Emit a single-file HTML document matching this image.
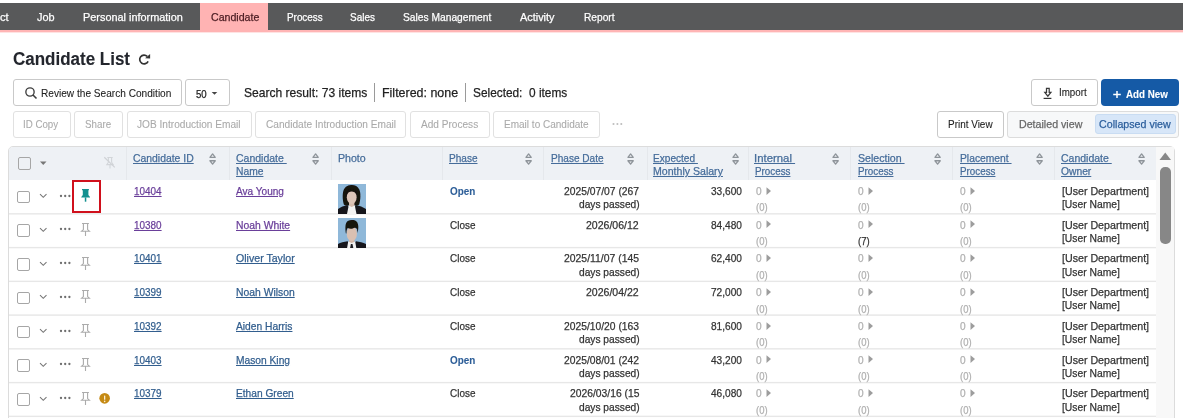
<!DOCTYPE html>
<html><head><meta charset="utf-8"><style>
html,body{margin:0;padding:0;width:1183px;height:418px;overflow:hidden;background:#fff;position:relative;font-family:"Liberation Sans", sans-serif;}
.t{position:absolute;white-space:nowrap;transform-origin:0 0;-webkit-text-stroke:0.25px currentColor;}
.a{position:absolute;box-sizing:border-box;}
</style></head><body>
<div class="a" style="left:0px;top:3px;width:1183px;height:27px;background:#58595a;"></div>
<div class="a" style="left:0px;top:30px;width:1183px;height:2px;background:#ffb5b5;"></div>
<div class="a" style="left:0px;top:32px;width:1183px;height:1px;background:#ffe3e3;"></div>
<div class="a" style="left:200px;top:3px;width:68px;height:29px;background:#ffb3b3;"></div>
<svg class="a" style="left:137px;top:53px;" width="15" height="14" viewBox="0 0 15 14"><path d="M10.2 3.3 A4.4 4.4 0 1 0 11.1 8.3" fill="none" stroke="#333" stroke-width="1.7"/><path d="M13.1 1 L13.1 5.5 L8.1 5.2 Z" fill="#333"/></svg>
<div class="a" style="left:12.5px;top:79px;width:169.0px;height:27px;border:1px solid #c9c9c9;border-radius:3px;background:#fff;"></div>
<svg class="a" style="left:25px;top:87px;" width="13" height="13" viewBox="0 0 13 13"><circle cx="5" cy="5" r="4.15" fill="none" stroke="#3d3d3d" stroke-width="1.35"/><line x1="8" y1="8" x2="11.5" y2="11.6" stroke="#3d3d3d" stroke-width="1.5"/></svg>
<div class="a" style="left:185px;top:79px;width:45px;height:27px;border:1px solid #c9c9c9;border-radius:3px;background:#fff;"></div>
<svg class="a" style="left:211px;top:91px;" width="7" height="5" viewBox="0 0 7 5"><path d="M0.7 1 L6.3 1 L3.5 3.7 Z" fill="#444"/></svg>
<div class="a" style="left:374px;top:83px;width:1px;height:19px;background:#9a9a9a;"></div>
<div class="a" style="left:465px;top:83px;width:1px;height:19px;background:#9a9a9a;"></div>
<div class="a" style="left:12.5px;top:111px;width:58.5px;height:27px;border:1px solid #e1e1e1;border-radius:3px;background:#fff;"></div>
<div class="a" style="left:74px;top:111px;width:48.5px;height:27px;border:1px solid #e1e1e1;border-radius:3px;background:#fff;"></div>
<div class="a" style="left:126.5px;top:111px;width:125.5px;height:27px;border:1px solid #e1e1e1;border-radius:3px;background:#fff;"></div>
<div class="a" style="left:255px;top:111px;width:151px;height:27px;border:1px solid #e1e1e1;border-radius:3px;background:#fff;"></div>
<div class="a" style="left:410px;top:111px;width:79.5px;height:27px;border:1px solid #e1e1e1;border-radius:3px;background:#fff;"></div>
<div class="a" style="left:493px;top:111px;width:107px;height:27px;border:1px solid #e1e1e1;border-radius:3px;background:#fff;"></div>
<svg class="a" style="left:611px;top:122px;" width="13" height="4" viewBox="0 0 13 4"><circle cx="2.5" cy="2" r="1.05" fill="#bdbdbd"/><circle cx="6.4" cy="2" r="1.05" fill="#bdbdbd"/><circle cx="10.3" cy="2" r="1.05" fill="#bdbdbd"/></svg>
<div class="a" style="left:1030.5px;top:79px;width:67.0px;height:27px;border:1px solid #c9c9c9;border-radius:3px;background:#fff;"></div>
<svg class="a" style="left:1043px;top:87px;" width="10" height="13" viewBox="0 0 10 13"><path d="M3.5 1.3 H6.2 V5.4 H7.9 L4.85 9.2 L1.8 5.4 H3.5 Z" fill="none" stroke="#3a3a3a" stroke-width="1.25" stroke-linejoin="miter"/><line x1="0.6" y1="11.4" x2="8.4" y2="11.4" stroke="#333" stroke-width="1.2"/></svg>
<div class="a" style="left:1101px;top:79px;width:78px;height:27px;background:#155aa6;border-radius:4px;"></div>
<svg class="a" style="left:1112px;top:90px;" width="10" height="9" viewBox="0 0 10 9"><path d="M5 1 V8 M1.2 4.5 H8.8" stroke="#fff" stroke-width="1.5"/></svg>
<div class="a" style="left:937px;top:111px;width:66.5px;height:26.5px;border:1px solid #c9c9c9;border-radius:3px;background:#fff;"></div>
<div class="a" style="left:1007px;top:111px;width:172px;height:27px;border:1px solid #dcdcdc;border-radius:3px;background:#f7f8f9;"></div>
<div class="a" style="left:1095px;top:114px;width:81px;height:20px;background:#d7e6f8;border:1px solid #c9dcf2;border-radius:3px;"></div>
<div class="a" style="left:8px;top:146px;width:1167px;height:284px;border:1px solid #dcdcdc;border-radius:5px;background:#fff;"></div>
<div class="a" style="left:9px;top:147px;width:1147px;height:33px;background:#eef1f5;border-top-left-radius:4px;"></div>
<div class="a" style="left:126px;top:147px;width:1px;height:33px;background:#e5e8ec;"></div>
<div class="a" style="left:229px;top:147px;width:1px;height:33px;background:#e5e8ec;"></div>
<div class="a" style="left:331px;top:147px;width:1px;height:33px;background:#e5e8ec;"></div>
<div class="a" style="left:442px;top:147px;width:1px;height:33px;background:#e5e8ec;"></div>
<div class="a" style="left:543px;top:147px;width:1px;height:33px;background:#e5e8ec;"></div>
<div class="a" style="left:647px;top:147px;width:1px;height:33px;background:#e5e8ec;"></div>
<div class="a" style="left:748px;top:147px;width:1px;height:33px;background:#e5e8ec;"></div>
<div class="a" style="left:850px;top:147px;width:1px;height:33px;background:#e5e8ec;"></div>
<div class="a" style="left:952px;top:147px;width:1px;height:33px;background:#e5e8ec;"></div>
<div class="a" style="left:1054px;top:147px;width:1px;height:33px;background:#e5e8ec;"></div>
<svg class="a" style="left:9px;top:0px;" width="1147" height="418"><rect x="0" y="213.15" width="1147" height="1.4" fill="#e7e7e7"/><rect x="0" y="246.90" width="1147" height="1.4" fill="#e7e7e7"/><rect x="0" y="280.65" width="1147" height="1.4" fill="#e7e7e7"/><rect x="0" y="314.40" width="1147" height="1.4" fill="#e7e7e7"/><rect x="0" y="348.15" width="1147" height="1.4" fill="#e7e7e7"/><rect x="0" y="381.90" width="1147" height="1.4" fill="#e7e7e7"/><rect x="0" y="415.65" width="1147" height="1.4" fill="#e7e7e7"/></svg>
<div class="a" style="left:17.5px;top:157px;width:13.0px;height:13px;border:1.6px solid #a6a6a6;border-radius:2px;"></div>
<svg class="a" style="left:39px;top:160px;" width="9" height="6" viewBox="0 0 9 6"><path d="M1 1.5 L7.5 1.5 L4.25 5 Z" fill="#777"/></svg>
<svg class="a" style="left:102px;top:155px;" width="15" height="15" viewBox="0 0 15 15"><path d="M5.3 2.5 H10.7 M6.4 2.5 V7.2 L4.8 9.6 H11.2 L9.6 7.2 V2.5 M8 9.6 V13.5" fill="none" stroke="#d2d5d9" stroke-width="1.1"/><line x1="2.3" y1="2.2" x2="12.8" y2="12.4" stroke="#cfd2d6" stroke-width="1.2"/></svg>
<svg class="a" style="left:209px;top:153px;" width="8" height="13" viewBox="0 0 8 13"><path d="M0.95 4.35 L3.6 0.95 L6.25 4.35 Z M0.95 7.75 L3.6 11.15 L6.25 7.75 Z" fill="none" stroke="#8e949a" stroke-width="1.3" stroke-linejoin="round"/></svg>
<svg class="a" style="left:312px;top:153px;" width="8" height="13" viewBox="0 0 8 13"><path d="M0.95 4.35 L3.6 0.95 L6.25 4.35 Z M0.95 7.75 L3.6 11.15 L6.25 7.75 Z" fill="none" stroke="#8e949a" stroke-width="1.3" stroke-linejoin="round"/></svg>
<svg class="a" style="left:525px;top:153px;" width="8" height="13" viewBox="0 0 8 13"><path d="M0.95 4.35 L3.6 0.95 L6.25 4.35 Z M0.95 7.75 L3.6 11.15 L6.25 7.75 Z" fill="none" stroke="#8e949a" stroke-width="1.3" stroke-linejoin="round"/></svg>
<svg class="a" style="left:627px;top:153px;" width="8" height="13" viewBox="0 0 8 13"><path d="M0.95 4.35 L3.6 0.95 L6.25 4.35 Z M0.95 7.75 L3.6 11.15 L6.25 7.75 Z" fill="none" stroke="#8e949a" stroke-width="1.3" stroke-linejoin="round"/></svg>
<svg class="a" style="left:731.7px;top:153px;" width="8" height="13" viewBox="0 0 8 13"><path d="M0.95 4.35 L3.6 0.95 L6.25 4.35 Z M0.95 7.75 L3.6 11.15 L6.25 7.75 Z" fill="none" stroke="#8e949a" stroke-width="1.3" stroke-linejoin="round"/></svg>
<svg class="a" style="left:831.7px;top:153px;" width="8" height="13" viewBox="0 0 8 13"><path d="M0.95 4.35 L3.6 0.95 L6.25 4.35 Z M0.95 7.75 L3.6 11.15 L6.25 7.75 Z" fill="none" stroke="#8e949a" stroke-width="1.3" stroke-linejoin="round"/></svg>
<svg class="a" style="left:934px;top:153px;" width="8" height="13" viewBox="0 0 8 13"><path d="M0.95 4.35 L3.6 0.95 L6.25 4.35 Z M0.95 7.75 L3.6 11.15 L6.25 7.75 Z" fill="none" stroke="#8e949a" stroke-width="1.3" stroke-linejoin="round"/></svg>
<svg class="a" style="left:1036.2px;top:153px;" width="8" height="13" viewBox="0 0 8 13"><path d="M0.95 4.35 L3.6 0.95 L6.25 4.35 Z M0.95 7.75 L3.6 11.15 L6.25 7.75 Z" fill="none" stroke="#8e949a" stroke-width="1.3" stroke-linejoin="round"/></svg>
<svg class="a" style="left:1137.8px;top:153px;" width="8" height="13" viewBox="0 0 8 13"><path d="M0.95 4.35 L3.6 0.95 L6.25 4.35 Z M0.95 7.75 L3.6 11.15 L6.25 7.75 Z" fill="none" stroke="#8e949a" stroke-width="1.3" stroke-linejoin="round"/></svg>
<div class="a" style="left:1156px;top:147px;width:18px;height:271px;background:#f8f8f8;"></div>
<svg class="a" style="left:1159px;top:151px;" width="13" height="10" viewBox="0 0 13 10"><path d="M0.5 9 L6.25 1.5 L12 9 Z" fill="#888"/></svg>
<div class="a" style="left:1160px;top:167px;width:10.5px;height:76.5px;background:#878787;border-radius:5px;"></div>
<div class="a" style="left:17px;top:190.5px;width:13px;height:12.5px;border:1.6px solid #a6a6a6;border-radius:2px;background:#fff;"></div>
<svg class="a" style="left:39px;top:193.0px;" width="9" height="6" viewBox="0 0 9 6"><path d="M1 1.2 L4.25 4.3 L7.5 1.2" fill="none" stroke="#777" stroke-width="1.1"/></svg>
<svg class="a" style="left:59px;top:193.5px;" width="13" height="4" viewBox="0 0 13 4"><circle cx="2" cy="2" r="1.15" fill="#6e6e6e"/><circle cx="6.2" cy="2" r="1.15" fill="#6e6e6e"/><circle cx="10.4" cy="2" r="1.15" fill="#6e6e6e"/></svg>
<svg class="a" style="left:80px;top:188px;" width="12" height="15" viewBox="0 0 12 15"><path d="M2 1 H8.9 V2.2 H8.4 V7 L10 9 V9.6 H1.3 V9 L2.8 7 V2.2 H2 Z" fill="#13908f"/><rect x="4.8" y="9.4" width="1.5" height="4.3" fill="#13908f"/></svg>
<div class="a" style="left:72px;top:180px;width:28.5px;height:33px;border:2.6px solid #d0101c;"></div>
<svg class="a" style="left:766.2px;top:186.6px;" width="6" height="9" viewBox="0 0 6 9"><path d="M0.5 0.3 L5 4.1 L0.5 7.9 Z" fill="#9d9d9d"/></svg>
<svg class="a" style="left:868.2px;top:186.6px;" width="6" height="9" viewBox="0 0 6 9"><path d="M0.5 0.3 L5 4.1 L0.5 7.9 Z" fill="#9d9d9d"/></svg>
<svg class="a" style="left:970.2px;top:186.6px;" width="6" height="9" viewBox="0 0 6 9"><path d="M0.5 0.3 L5 4.1 L0.5 7.9 Z" fill="#9d9d9d"/></svg>
<div class="a" style="left:17px;top:224.25px;width:13px;height:12.5px;border:1.6px solid #a6a6a6;border-radius:2px;background:#fff;"></div>
<svg class="a" style="left:39px;top:226.75px;" width="9" height="6" viewBox="0 0 9 6"><path d="M1 1.2 L4.25 4.3 L7.5 1.2" fill="none" stroke="#777" stroke-width="1.1"/></svg>
<svg class="a" style="left:59px;top:227.25px;" width="13" height="4" viewBox="0 0 13 4"><circle cx="2" cy="2" r="1.15" fill="#6e6e6e"/><circle cx="6.2" cy="2" r="1.15" fill="#6e6e6e"/><circle cx="10.4" cy="2" r="1.15" fill="#6e6e6e"/></svg>
<svg class="a" style="left:80px;top:221.75px;" width="12" height="15" viewBox="0 0 12 15"><path d="M2 1.5 H8.9 M3.4 1.5 V7.6 L1.6 9.2 H9.4 L7.6 7.6 V1.5 M5.5 9.2 V14" fill="none" stroke="#ababab" stroke-width="1.1"/></svg>
<svg class="a" style="left:766.2px;top:220.35px;" width="6" height="9" viewBox="0 0 6 9"><path d="M0.5 0.3 L5 4.1 L0.5 7.9 Z" fill="#9d9d9d"/></svg>
<svg class="a" style="left:868.2px;top:220.35px;" width="6" height="9" viewBox="0 0 6 9"><path d="M0.5 0.3 L5 4.1 L0.5 7.9 Z" fill="#9d9d9d"/></svg>
<svg class="a" style="left:970.2px;top:220.35px;" width="6" height="9" viewBox="0 0 6 9"><path d="M0.5 0.3 L5 4.1 L0.5 7.9 Z" fill="#9d9d9d"/></svg>
<div class="a" style="left:17px;top:258.0px;width:13px;height:12.5px;border:1.6px solid #a6a6a6;border-radius:2px;background:#fff;"></div>
<svg class="a" style="left:39px;top:260.5px;" width="9" height="6" viewBox="0 0 9 6"><path d="M1 1.2 L4.25 4.3 L7.5 1.2" fill="none" stroke="#777" stroke-width="1.1"/></svg>
<svg class="a" style="left:59px;top:261.0px;" width="13" height="4" viewBox="0 0 13 4"><circle cx="2" cy="2" r="1.15" fill="#6e6e6e"/><circle cx="6.2" cy="2" r="1.15" fill="#6e6e6e"/><circle cx="10.4" cy="2" r="1.15" fill="#6e6e6e"/></svg>
<svg class="a" style="left:80px;top:255.5px;" width="12" height="15" viewBox="0 0 12 15"><path d="M2 1.5 H8.9 M3.4 1.5 V7.6 L1.6 9.2 H9.4 L7.6 7.6 V1.5 M5.5 9.2 V14" fill="none" stroke="#ababab" stroke-width="1.1"/></svg>
<svg class="a" style="left:766.2px;top:254.1px;" width="6" height="9" viewBox="0 0 6 9"><path d="M0.5 0.3 L5 4.1 L0.5 7.9 Z" fill="#9d9d9d"/></svg>
<svg class="a" style="left:868.2px;top:254.1px;" width="6" height="9" viewBox="0 0 6 9"><path d="M0.5 0.3 L5 4.1 L0.5 7.9 Z" fill="#9d9d9d"/></svg>
<svg class="a" style="left:970.2px;top:254.1px;" width="6" height="9" viewBox="0 0 6 9"><path d="M0.5 0.3 L5 4.1 L0.5 7.9 Z" fill="#9d9d9d"/></svg>
<div class="a" style="left:17px;top:291.75px;width:13px;height:12.5px;border:1.6px solid #a6a6a6;border-radius:2px;background:#fff;"></div>
<svg class="a" style="left:39px;top:294.25px;" width="9" height="6" viewBox="0 0 9 6"><path d="M1 1.2 L4.25 4.3 L7.5 1.2" fill="none" stroke="#777" stroke-width="1.1"/></svg>
<svg class="a" style="left:59px;top:294.75px;" width="13" height="4" viewBox="0 0 13 4"><circle cx="2" cy="2" r="1.15" fill="#6e6e6e"/><circle cx="6.2" cy="2" r="1.15" fill="#6e6e6e"/><circle cx="10.4" cy="2" r="1.15" fill="#6e6e6e"/></svg>
<svg class="a" style="left:80px;top:289.25px;" width="12" height="15" viewBox="0 0 12 15"><path d="M2 1.5 H8.9 M3.4 1.5 V7.6 L1.6 9.2 H9.4 L7.6 7.6 V1.5 M5.5 9.2 V14" fill="none" stroke="#ababab" stroke-width="1.1"/></svg>
<svg class="a" style="left:766.2px;top:287.85px;" width="6" height="9" viewBox="0 0 6 9"><path d="M0.5 0.3 L5 4.1 L0.5 7.9 Z" fill="#9d9d9d"/></svg>
<svg class="a" style="left:868.2px;top:287.85px;" width="6" height="9" viewBox="0 0 6 9"><path d="M0.5 0.3 L5 4.1 L0.5 7.9 Z" fill="#9d9d9d"/></svg>
<svg class="a" style="left:970.2px;top:287.85px;" width="6" height="9" viewBox="0 0 6 9"><path d="M0.5 0.3 L5 4.1 L0.5 7.9 Z" fill="#9d9d9d"/></svg>
<div class="a" style="left:17px;top:325.5px;width:13px;height:12.5px;border:1.6px solid #a6a6a6;border-radius:2px;background:#fff;"></div>
<svg class="a" style="left:39px;top:328.0px;" width="9" height="6" viewBox="0 0 9 6"><path d="M1 1.2 L4.25 4.3 L7.5 1.2" fill="none" stroke="#777" stroke-width="1.1"/></svg>
<svg class="a" style="left:59px;top:328.5px;" width="13" height="4" viewBox="0 0 13 4"><circle cx="2" cy="2" r="1.15" fill="#6e6e6e"/><circle cx="6.2" cy="2" r="1.15" fill="#6e6e6e"/><circle cx="10.4" cy="2" r="1.15" fill="#6e6e6e"/></svg>
<svg class="a" style="left:80px;top:323.0px;" width="12" height="15" viewBox="0 0 12 15"><path d="M2 1.5 H8.9 M3.4 1.5 V7.6 L1.6 9.2 H9.4 L7.6 7.6 V1.5 M5.5 9.2 V14" fill="none" stroke="#ababab" stroke-width="1.1"/></svg>
<svg class="a" style="left:766.2px;top:321.6px;" width="6" height="9" viewBox="0 0 6 9"><path d="M0.5 0.3 L5 4.1 L0.5 7.9 Z" fill="#9d9d9d"/></svg>
<svg class="a" style="left:868.2px;top:321.6px;" width="6" height="9" viewBox="0 0 6 9"><path d="M0.5 0.3 L5 4.1 L0.5 7.9 Z" fill="#9d9d9d"/></svg>
<svg class="a" style="left:970.2px;top:321.6px;" width="6" height="9" viewBox="0 0 6 9"><path d="M0.5 0.3 L5 4.1 L0.5 7.9 Z" fill="#9d9d9d"/></svg>
<div class="a" style="left:17px;top:359.25px;width:13px;height:12.5px;border:1.6px solid #a6a6a6;border-radius:2px;background:#fff;"></div>
<svg class="a" style="left:39px;top:361.75px;" width="9" height="6" viewBox="0 0 9 6"><path d="M1 1.2 L4.25 4.3 L7.5 1.2" fill="none" stroke="#777" stroke-width="1.1"/></svg>
<svg class="a" style="left:59px;top:362.25px;" width="13" height="4" viewBox="0 0 13 4"><circle cx="2" cy="2" r="1.15" fill="#6e6e6e"/><circle cx="6.2" cy="2" r="1.15" fill="#6e6e6e"/><circle cx="10.4" cy="2" r="1.15" fill="#6e6e6e"/></svg>
<svg class="a" style="left:80px;top:356.75px;" width="12" height="15" viewBox="0 0 12 15"><path d="M2 1.5 H8.9 M3.4 1.5 V7.6 L1.6 9.2 H9.4 L7.6 7.6 V1.5 M5.5 9.2 V14" fill="none" stroke="#ababab" stroke-width="1.1"/></svg>
<svg class="a" style="left:766.2px;top:355.35px;" width="6" height="9" viewBox="0 0 6 9"><path d="M0.5 0.3 L5 4.1 L0.5 7.9 Z" fill="#9d9d9d"/></svg>
<svg class="a" style="left:868.2px;top:355.35px;" width="6" height="9" viewBox="0 0 6 9"><path d="M0.5 0.3 L5 4.1 L0.5 7.9 Z" fill="#9d9d9d"/></svg>
<svg class="a" style="left:970.2px;top:355.35px;" width="6" height="9" viewBox="0 0 6 9"><path d="M0.5 0.3 L5 4.1 L0.5 7.9 Z" fill="#9d9d9d"/></svg>
<div class="a" style="left:17px;top:393.0px;width:13px;height:12.5px;border:1.6px solid #a6a6a6;border-radius:2px;background:#fff;"></div>
<svg class="a" style="left:39px;top:395.5px;" width="9" height="6" viewBox="0 0 9 6"><path d="M1 1.2 L4.25 4.3 L7.5 1.2" fill="none" stroke="#777" stroke-width="1.1"/></svg>
<svg class="a" style="left:59px;top:396.0px;" width="13" height="4" viewBox="0 0 13 4"><circle cx="2" cy="2" r="1.15" fill="#6e6e6e"/><circle cx="6.2" cy="2" r="1.15" fill="#6e6e6e"/><circle cx="10.4" cy="2" r="1.15" fill="#6e6e6e"/></svg>
<svg class="a" style="left:80px;top:390.5px;" width="12" height="15" viewBox="0 0 12 15"><path d="M2 1.5 H8.9 M3.4 1.5 V7.6 L1.6 9.2 H9.4 L7.6 7.6 V1.5 M5.5 9.2 V14" fill="none" stroke="#ababab" stroke-width="1.1"/></svg>
<svg class="a" style="left:99px;top:392.5px;" width="12" height="12" viewBox="0 0 12 12"><circle cx="5.65" cy="5.35" r="5.3" fill="#c58a14"/><rect x="5" y="2.4" width="1.3" height="4.3" rx="0.5" fill="#fbeed2"/><circle cx="5.65" cy="8.4" r="0.8" fill="#fbeed2"/></svg>
<svg class="a" style="left:766.2px;top:389.1px;" width="6" height="9" viewBox="0 0 6 9"><path d="M0.5 0.3 L5 4.1 L0.5 7.9 Z" fill="#9d9d9d"/></svg>
<svg class="a" style="left:868.2px;top:389.1px;" width="6" height="9" viewBox="0 0 6 9"><path d="M0.5 0.3 L5 4.1 L0.5 7.9 Z" fill="#9d9d9d"/></svg>
<svg class="a" style="left:970.2px;top:389.1px;" width="6" height="9" viewBox="0 0 6 9"><path d="M0.5 0.3 L5 4.1 L0.5 7.9 Z" fill="#9d9d9d"/></svg>
<svg class="a" style="left:338px;top:184px;" width="28" height="30" viewBox="0 0 28 30"><defs><filter id="bl" x="-5%" y="-5%" width="110%" height="110%"><feGaussianBlur stdDeviation="0.4"/></filter></defs>
<rect width="28" height="30" fill="#8fb8d9"/>
<g filter="url(#bl)">
<path d="M5.8 20.5 C4.4 15 4.2 8 6.3 4.8 C8.3 1.6 11.5 1 13.8 1 C17 1 19.9 2.4 21.3 5.5 C22.9 9 22.7 15.5 21.2 20.5 C20 21.6 18 21.9 16.5 21.6 L11 21.6 C9 21.9 7 21.6 5.8 20.5 Z" fill="#17120f"/>
<rect x="11" y="17" width="5.4" height="7" fill="#d6bcae"/>
<ellipse cx="13.7" cy="13.2" rx="4.9" ry="6.8" fill="#ddc5b8"/>
<path d="M8.6 10.8 C9 6.5 11 5 14 5 C17 5 18.7 6.8 18.9 10.8 C17.6 8.2 15.6 7.4 13.6 7.4 C11.6 7.4 9.6 8.4 8.6 10.8 Z" fill="#17120f"/>
<path d="M0 30 V25 C2.5 23 6 22 9.5 21.3 L13.7 26.5 L18 21.3 C21.5 22 25 23 28 25 V30 Z" fill="#15171d"/>
<path d="M10.6 21.6 L13.7 23 L16.9 21.6 L17 22.5 L18.5 30 H9 L10.5 22.5 Z" fill="#f3f3f3"/>
</g></svg>
<svg class="a" style="left:338px;top:217.5px;" width="28" height="30" viewBox="0 0 28 30"><rect width="28" height="30" fill="#8fb8d9"/>
<g filter="url(#bl)">
<rect x="11" y="20" width="5.4" height="5" fill="#d2b6a6"/>
<ellipse cx="13.8" cy="15.8" rx="5.1" ry="7.4" fill="#d9c0b2"/>
<path d="M7.9 15.5 C7 9.5 7.3 4.8 9.8 3.1 C12.2 1.5 16.3 1.5 18.5 3.4 C20.6 5.3 20.7 9.8 19.6 15 L19.1 11.2 C18 9.6 16.5 9.2 14.8 10.4 C13 11.2 11 10.6 9.8 10 C8.8 10.8 8.4 12.5 8.4 15.5 Z" fill="#16120f"/>
<path d="M0 30 V26 C2.5 24.6 6 23.8 9.5 23.3 L13.7 27.5 L18 23.3 C21.5 23.8 25 24.6 28 26 V30 Z" fill="#15171d"/>
<path d="M10.2 23.4 L13.7 25 L17.2 23.4 L18.3 30 H9.1 Z" fill="#f1f1f1"/>
<path d="M12.9 26 L14.5 26 L15.3 30 H12.1 Z" fill="#1a1c22"/>
</g></svg>
<span class="t" style="left:-0.50px;top:12.00px;font-size:11.5px;line-height:11.5px;color:#ffffff;transform:scaleX(0.9744);">ct</span>
<span class="t" style="left:37.30px;top:12.00px;font-size:11.5px;line-height:11.5px;color:#ffffff;transform:scaleX(0.9479);">Job</span>
<span class="t" style="left:82.50px;top:12.00px;font-size:11.5px;line-height:11.5px;color:#ffffff;transform:scaleX(0.9469);">Personal information</span>
<span class="t" style="left:210.50px;top:12.00px;font-size:11.5px;line-height:11.5px;color:#4a1c22;transform:scaleX(0.9225);">Candidate</span>
<span class="t" style="left:286.70px;top:12.00px;font-size:11.5px;line-height:11.5px;color:#ffffff;transform:scaleX(0.8590);">Process</span>
<span class="t" style="left:350.40px;top:12.00px;font-size:11.5px;line-height:11.5px;color:#ffffff;transform:scaleX(0.8650);">Sales</span>
<span class="t" style="left:403.40px;top:12.00px;font-size:11.5px;line-height:11.5px;color:#ffffff;transform:scaleX(0.8910);">Sales Management</span>
<span class="t" style="left:520.30px;top:12.00px;font-size:11.5px;line-height:11.5px;color:#ffffff;transform:scaleX(0.9463);">Activity</span>
<span class="t" style="left:583.70px;top:12.00px;font-size:11.5px;line-height:11.5px;color:#ffffff;transform:scaleX(0.8861);">Report</span>
<span class="t" style="left:13.40px;top:50.00px;font-size:18px;line-height:18px;color:#23262d;font-weight:700;-webkit-text-stroke:0.1px currentColor;transform:scaleX(0.9434);">Candidate List</span>
<span class="t" style="left:40.70px;top:89.00px;font-size:10.2px;line-height:10.2px;color:#222;transform:scaleX(0.9923);-webkit-text-stroke:0.08px currentColor;">Review the Search Condition</span>
<span class="t" style="left:195.90px;top:90.00px;font-size:10.4px;line-height:10.4px;color:#222;transform:scaleX(0.9254);">50</span>
<span class="t" style="left:243.70px;top:86.00px;font-size:13.3px;line-height:13.3px;color:#222;transform:scaleX(0.9073);">Search result: 73 items</span>
<span class="t" style="left:381.66px;top:86.00px;font-size:13.3px;line-height:13.3px;color:#222;transform:scaleX(0.9360);">Filtered: none</span>
<span class="t" style="left:473.00px;top:86.00px;font-size:13.3px;line-height:13.3px;color:#222;transform:scaleX(0.8912);">Selected:&nbsp; 0 items</span>
<span class="t" style="left:23.40px;top:120.00px;font-size:10.2px;line-height:10.2px;color:#aaaaaa;transform:scaleX(0.9547);-webkit-text-stroke:0.08px currentColor;">ID Copy</span>
<span class="t" style="left:85.40px;top:120.00px;font-size:10.2px;line-height:10.2px;color:#aaaaaa;transform:scaleX(0.9593);-webkit-text-stroke:0.08px currentColor;">Share</span>
<span class="t" style="left:137.10px;top:120.00px;font-size:10.2px;line-height:10.2px;color:#aaaaaa;transform:scaleX(0.9940);-webkit-text-stroke:0.08px currentColor;">JOB Introduction Email</span>
<span class="t" style="left:266.20px;top:120.00px;font-size:10.2px;line-height:10.2px;color:#aaaaaa;transform:scaleX(0.9942);-webkit-text-stroke:0.08px currentColor;">Candidate Introduction Email</span>
<span class="t" style="left:421.40px;top:120.00px;font-size:10.2px;line-height:10.2px;color:#aaaaaa;transform:scaleX(0.9902);-webkit-text-stroke:0.08px currentColor;">Add Process</span>
<span class="t" style="left:503.90px;top:120.00px;font-size:10.2px;line-height:10.2px;color:#aaaaaa;transform:scaleX(0.9837);-webkit-text-stroke:0.08px currentColor;">Email to Candidate</span>
<span class="t" style="left:1058.80px;top:88.00px;font-size:10px;line-height:10px;color:#222;transform:scaleX(0.9768);-webkit-text-stroke:0.08px currentColor;">Import</span>
<span class="t" style="left:1125.70px;top:89.00px;font-size:11px;line-height:11px;color:#ffffff;font-weight:700;-webkit-text-stroke:0.1px currentColor;transform:scaleX(0.8905);">Add New</span>
<span class="t" style="left:947.60px;top:120.00px;font-size:10.2px;line-height:10.2px;color:#222;transform:scaleX(0.9759);-webkit-text-stroke:0.08px currentColor;">Print View</span>
<span class="t" style="left:1018.80px;top:119.00px;font-size:11.5px;line-height:11.5px;color:#666;transform:scaleX(0.9263);">Detailed view</span>
<span class="t" style="left:1099.20px;top:119.00px;font-size:11.5px;line-height:11.5px;color:#2b5e9c;transform:scaleX(0.9277);">Collapsed view</span>
<span class="t" style="left:133.40px;top:153.00px;font-size:11.2px;line-height:11.2px;color:#456c9a;transform:scaleX(0.9291);text-decoration:underline;">Candidate ID</span>
<span class="t" style="left:235.70px;top:153.00px;font-size:11.2px;line-height:11.2px;color:#456c9a;transform:scaleX(0.9373);text-decoration:underline;">Candidate&nbsp;</span>
<span class="t" style="left:235.70px;top:166.00px;font-size:11.2px;line-height:11.2px;color:#456c9a;transform:scaleX(0.9187);text-decoration:underline;">Name</span>
<span class="t" style="left:338.00px;top:153.00px;font-size:11.2px;line-height:11.2px;color:#456c9a;transform:scaleX(0.9478);">Photo</span>
<span class="t" style="left:449.20px;top:153.00px;font-size:11.2px;line-height:11.2px;color:#456c9a;transform:scaleX(0.8984);text-decoration:underline;">Phase</span>
<span class="t" style="left:551.20px;top:153.00px;font-size:11.2px;line-height:11.2px;color:#456c9a;transform:scaleX(0.8997);text-decoration:underline;">Phase Date</span>
<span class="t" style="left:653.40px;top:153.00px;font-size:11.2px;line-height:11.2px;color:#456c9a;transform:scaleX(0.9026);text-decoration:underline;">Expected&nbsp;</span>
<span class="t" style="left:653.40px;top:166.00px;font-size:11.2px;line-height:11.2px;color:#456c9a;transform:scaleX(0.9449);text-decoration:underline;">Monthly Salary</span>
<span class="t" style="left:754.28px;top:153.00px;font-size:11.2px;line-height:11.2px;color:#456c9a;transform:scaleX(1.0159);text-decoration:underline;">Internal&nbsp;</span>
<span class="t" style="left:755.30px;top:166.00px;font-size:11.2px;line-height:11.2px;color:#456c9a;transform:scaleX(0.8770);text-decoration:underline;">Process</span>
<span class="t" style="left:857.50px;top:153.00px;font-size:11.2px;line-height:11.2px;color:#456c9a;transform:scaleX(0.9476);text-decoration:underline;">Selection&nbsp;</span>
<span class="t" style="left:857.50px;top:166.00px;font-size:11.2px;line-height:11.2px;color:#456c9a;transform:scaleX(0.8770);text-decoration:underline;">Process</span>
<span class="t" style="left:959.50px;top:153.00px;font-size:11.2px;line-height:11.2px;color:#456c9a;transform:scaleX(0.9210);text-decoration:underline;">Placement&nbsp;</span>
<span class="t" style="left:959.50px;top:166.00px;font-size:11.2px;line-height:11.2px;color:#456c9a;transform:scaleX(0.8770);text-decoration:underline;">Process</span>
<span class="t" style="left:1061.30px;top:153.00px;font-size:11.2px;line-height:11.2px;color:#456c9a;transform:scaleX(0.9373);text-decoration:underline;">Candidate&nbsp;</span>
<span class="t" style="left:1061.30px;top:166.00px;font-size:11.2px;line-height:11.2px;color:#456c9a;transform:scaleX(0.9187);text-decoration:underline;">Owner</span>
<span class="t" style="left:134.00px;top:186.00px;font-size:11px;line-height:11px;color:#6a3f9a;transform:scaleX(0.9025);text-decoration:underline;">10404</span>
<span class="t" style="left:236.00px;top:186.00px;font-size:11px;line-height:11px;color:#6a3f9a;transform:scaleX(0.9144);text-decoration:underline;">Ava Young</span>
<span class="t" style="left:449.90px;top:186.00px;font-size:11px;line-height:11px;color:#2d5e98;font-weight:700;-webkit-text-stroke:0.1px currentColor;transform:scaleX(0.9016);">Open</span>
<span class="t" style="left:564.10px;top:186.00px;font-size:11px;line-height:11px;color:#333333;transform:scaleX(0.9362);">2025/07/07 (267</span>
<span class="t" style="left:579.00px;top:199.00px;font-size:11px;line-height:11px;color:#333333;transform:scaleX(0.9265);">days passed)</span>
<span class="t" style="left:711.00px;top:186.00px;font-size:11px;line-height:11px;color:#333333;transform:scaleX(0.9187);">33,600</span>
<span class="t" style="left:755.80px;top:186.00px;font-size:11px;line-height:11px;color:#b0b0b0;transform:scaleX(0.9187);">0</span>
<span class="t" style="left:755.50px;top:202.00px;font-size:11px;line-height:11px;color:#b0b0b0;transform:scaleX(0.8607);">(0)</span>
<span class="t" style="left:857.80px;top:186.00px;font-size:11px;line-height:11px;color:#b0b0b0;transform:scaleX(0.9187);">0</span>
<span class="t" style="left:857.50px;top:202.00px;font-size:11px;line-height:11px;color:#b0b0b0;transform:scaleX(0.8607);">(0)</span>
<span class="t" style="left:959.80px;top:186.00px;font-size:11px;line-height:11px;color:#b0b0b0;transform:scaleX(0.9187);">0</span>
<span class="t" style="left:959.50px;top:202.00px;font-size:11px;line-height:11px;color:#b0b0b0;transform:scaleX(0.8607);">(0)</span>
<span class="t" style="left:1062.30px;top:186.00px;font-size:11px;line-height:11px;color:#333333;transform:scaleX(0.9687);">[User Department]</span>
<span class="t" style="left:1062.30px;top:199.00px;font-size:11px;line-height:11px;color:#333333;transform:scaleX(0.9371);">[User Name]</span>
<span class="t" style="left:134.00px;top:220.00px;font-size:11px;line-height:11px;color:#6a3f9a;transform:scaleX(0.9025);text-decoration:underline;">10380</span>
<span class="t" style="left:236.00px;top:220.00px;font-size:11px;line-height:11px;color:#6a3f9a;transform:scaleX(0.9415);text-decoration:underline;">Noah White</span>
<span class="t" style="left:449.60px;top:220.00px;font-size:11px;line-height:11px;color:#333333;transform:scaleX(0.9034);">Close</span>
<span class="t" style="left:586.40px;top:220.00px;font-size:11px;line-height:11px;color:#333333;transform:scaleX(0.9575);">2026/06/12</span>
<span class="t" style="left:711.00px;top:220.00px;font-size:11px;line-height:11px;color:#333333;transform:scaleX(0.9187);">84,480</span>
<span class="t" style="left:755.80px;top:220.00px;font-size:11px;line-height:11px;color:#b0b0b0;transform:scaleX(0.9187);">0</span>
<span class="t" style="left:755.50px;top:236.00px;font-size:11px;line-height:11px;color:#b0b0b0;transform:scaleX(0.8607);">(0)</span>
<span class="t" style="left:857.80px;top:220.00px;font-size:11px;line-height:11px;color:#b0b0b0;transform:scaleX(0.9187);">0</span>
<span class="t" style="left:857.50px;top:236.00px;font-size:11px;line-height:11px;color:#333;transform:scaleX(0.8607);">(7)</span>
<span class="t" style="left:959.80px;top:220.00px;font-size:11px;line-height:11px;color:#b0b0b0;transform:scaleX(0.9187);">0</span>
<span class="t" style="left:959.50px;top:236.00px;font-size:11px;line-height:11px;color:#b0b0b0;transform:scaleX(0.8607);">(0)</span>
<span class="t" style="left:1062.30px;top:220.00px;font-size:11px;line-height:11px;color:#333333;transform:scaleX(0.9687);">[User Department]</span>
<span class="t" style="left:1062.30px;top:233.00px;font-size:11px;line-height:11px;color:#333333;transform:scaleX(0.9371);">[User Name]</span>
<span class="t" style="left:134.00px;top:253.00px;font-size:11px;line-height:11px;color:#325e8e;transform:scaleX(0.9025);text-decoration:underline;">10401</span>
<span class="t" style="left:236.00px;top:253.00px;font-size:11px;line-height:11px;color:#325e8e;transform:scaleX(0.9632);text-decoration:underline;">Oliver Taylor</span>
<span class="t" style="left:449.60px;top:253.00px;font-size:11px;line-height:11px;color:#333333;transform:scaleX(0.9034);">Close</span>
<span class="t" style="left:564.10px;top:253.00px;font-size:11px;line-height:11px;color:#333333;transform:scaleX(0.9458);">2025/11/07 (145</span>
<span class="t" style="left:579.00px;top:267.00px;font-size:11px;line-height:11px;color:#333333;transform:scaleX(0.9265);">days passed)</span>
<span class="t" style="left:711.00px;top:253.00px;font-size:11px;line-height:11px;color:#333333;transform:scaleX(0.9187);">62,400</span>
<span class="t" style="left:755.80px;top:253.00px;font-size:11px;line-height:11px;color:#b0b0b0;transform:scaleX(0.9187);">0</span>
<span class="t" style="left:755.50px;top:270.00px;font-size:11px;line-height:11px;color:#b0b0b0;transform:scaleX(0.8607);">(0)</span>
<span class="t" style="left:857.80px;top:253.00px;font-size:11px;line-height:11px;color:#b0b0b0;transform:scaleX(0.9187);">0</span>
<span class="t" style="left:857.50px;top:270.00px;font-size:11px;line-height:11px;color:#b0b0b0;transform:scaleX(0.8607);">(0)</span>
<span class="t" style="left:959.80px;top:253.00px;font-size:11px;line-height:11px;color:#b0b0b0;transform:scaleX(0.9187);">0</span>
<span class="t" style="left:959.50px;top:270.00px;font-size:11px;line-height:11px;color:#b0b0b0;transform:scaleX(0.8607);">(0)</span>
<span class="t" style="left:1062.30px;top:253.00px;font-size:11px;line-height:11px;color:#333333;transform:scaleX(0.9687);">[User Department]</span>
<span class="t" style="left:1062.30px;top:267.00px;font-size:11px;line-height:11px;color:#333333;transform:scaleX(0.9371);">[User Name]</span>
<span class="t" style="left:134.00px;top:287.00px;font-size:11px;line-height:11px;color:#325e8e;transform:scaleX(0.9025);text-decoration:underline;">10399</span>
<span class="t" style="left:236.00px;top:287.00px;font-size:11px;line-height:11px;color:#325e8e;transform:scaleX(0.9415);text-decoration:underline;">Noah Wilson</span>
<span class="t" style="left:449.60px;top:287.00px;font-size:11px;line-height:11px;color:#333333;transform:scaleX(0.9034);">Close</span>
<span class="t" style="left:586.40px;top:287.00px;font-size:11px;line-height:11px;color:#333333;transform:scaleX(0.9575);">2026/04/22</span>
<span class="t" style="left:711.00px;top:287.00px;font-size:11px;line-height:11px;color:#333333;transform:scaleX(0.9187);">72,000</span>
<span class="t" style="left:755.80px;top:287.00px;font-size:11px;line-height:11px;color:#b0b0b0;transform:scaleX(0.9187);">0</span>
<span class="t" style="left:755.50px;top:304.00px;font-size:11px;line-height:11px;color:#b0b0b0;transform:scaleX(0.8607);">(0)</span>
<span class="t" style="left:857.80px;top:287.00px;font-size:11px;line-height:11px;color:#b0b0b0;transform:scaleX(0.9187);">0</span>
<span class="t" style="left:857.50px;top:304.00px;font-size:11px;line-height:11px;color:#b0b0b0;transform:scaleX(0.8607);">(0)</span>
<span class="t" style="left:959.80px;top:287.00px;font-size:11px;line-height:11px;color:#b0b0b0;transform:scaleX(0.9187);">0</span>
<span class="t" style="left:959.50px;top:304.00px;font-size:11px;line-height:11px;color:#b0b0b0;transform:scaleX(0.8607);">(0)</span>
<span class="t" style="left:1062.30px;top:287.00px;font-size:11px;line-height:11px;color:#333333;transform:scaleX(0.9687);">[User Department]</span>
<span class="t" style="left:1062.30px;top:300.00px;font-size:11px;line-height:11px;color:#333333;transform:scaleX(0.9371);">[User Name]</span>
<span class="t" style="left:134.00px;top:321.00px;font-size:11px;line-height:11px;color:#325e8e;transform:scaleX(0.9025);text-decoration:underline;">10392</span>
<span class="t" style="left:236.00px;top:321.00px;font-size:11px;line-height:11px;color:#325e8e;transform:scaleX(0.9325);text-decoration:underline;">Aiden Harris</span>
<span class="t" style="left:449.60px;top:321.00px;font-size:11px;line-height:11px;color:#333333;transform:scaleX(0.9034);">Close</span>
<span class="t" style="left:564.10px;top:321.00px;font-size:11px;line-height:11px;color:#333333;transform:scaleX(0.9362);">2025/10/20 (163</span>
<span class="t" style="left:579.00px;top:334.00px;font-size:11px;line-height:11px;color:#333333;transform:scaleX(0.9265);">days passed)</span>
<span class="t" style="left:711.00px;top:321.00px;font-size:11px;line-height:11px;color:#333333;transform:scaleX(0.9187);">81,600</span>
<span class="t" style="left:755.80px;top:321.00px;font-size:11px;line-height:11px;color:#b0b0b0;transform:scaleX(0.9187);">0</span>
<span class="t" style="left:755.50px;top:337.00px;font-size:11px;line-height:11px;color:#b0b0b0;transform:scaleX(0.8607);">(0)</span>
<span class="t" style="left:857.80px;top:321.00px;font-size:11px;line-height:11px;color:#b0b0b0;transform:scaleX(0.9187);">0</span>
<span class="t" style="left:857.50px;top:337.00px;font-size:11px;line-height:11px;color:#b0b0b0;transform:scaleX(0.8607);">(0)</span>
<span class="t" style="left:959.80px;top:321.00px;font-size:11px;line-height:11px;color:#b0b0b0;transform:scaleX(0.9187);">0</span>
<span class="t" style="left:959.50px;top:337.00px;font-size:11px;line-height:11px;color:#b0b0b0;transform:scaleX(0.8607);">(0)</span>
<span class="t" style="left:1062.30px;top:321.00px;font-size:11px;line-height:11px;color:#333333;transform:scaleX(0.9687);">[User Department]</span>
<span class="t" style="left:1062.30px;top:334.00px;font-size:11px;line-height:11px;color:#333333;transform:scaleX(0.9371);">[User Name]</span>
<span class="t" style="left:134.00px;top:355.00px;font-size:11px;line-height:11px;color:#325e8e;transform:scaleX(0.9025);text-decoration:underline;">10403</span>
<span class="t" style="left:236.00px;top:355.00px;font-size:11px;line-height:11px;color:#325e8e;transform:scaleX(0.9298);text-decoration:underline;">Mason King</span>
<span class="t" style="left:449.90px;top:355.00px;font-size:11px;line-height:11px;color:#2d5e98;font-weight:700;-webkit-text-stroke:0.1px currentColor;transform:scaleX(0.9016);">Open</span>
<span class="t" style="left:564.10px;top:355.00px;font-size:11px;line-height:11px;color:#333333;transform:scaleX(0.9362);">2025/08/01 (242</span>
<span class="t" style="left:579.00px;top:368.00px;font-size:11px;line-height:11px;color:#333333;transform:scaleX(0.9265);">days passed)</span>
<span class="t" style="left:711.00px;top:355.00px;font-size:11px;line-height:11px;color:#333333;transform:scaleX(0.9187);">43,200</span>
<span class="t" style="left:755.80px;top:355.00px;font-size:11px;line-height:11px;color:#b0b0b0;transform:scaleX(0.9187);">0</span>
<span class="t" style="left:755.50px;top:371.00px;font-size:11px;line-height:11px;color:#b0b0b0;transform:scaleX(0.8607);">(0)</span>
<span class="t" style="left:857.80px;top:355.00px;font-size:11px;line-height:11px;color:#b0b0b0;transform:scaleX(0.9187);">0</span>
<span class="t" style="left:857.50px;top:371.00px;font-size:11px;line-height:11px;color:#b0b0b0;transform:scaleX(0.8607);">(0)</span>
<span class="t" style="left:959.80px;top:355.00px;font-size:11px;line-height:11px;color:#b0b0b0;transform:scaleX(0.9187);">0</span>
<span class="t" style="left:959.50px;top:371.00px;font-size:11px;line-height:11px;color:#b0b0b0;transform:scaleX(0.8607);">(0)</span>
<span class="t" style="left:1062.30px;top:355.00px;font-size:11px;line-height:11px;color:#333333;transform:scaleX(0.9687);">[User Department]</span>
<span class="t" style="left:1062.30px;top:368.00px;font-size:11px;line-height:11px;color:#333333;transform:scaleX(0.9371);">[User Name]</span>
<span class="t" style="left:134.00px;top:388.00px;font-size:11px;line-height:11px;color:#325e8e;transform:scaleX(0.9025);text-decoration:underline;">10379</span>
<span class="t" style="left:236.00px;top:388.00px;font-size:11px;line-height:11px;color:#325e8e;transform:scaleX(0.9252);text-decoration:underline;">Ethan Green</span>
<span class="t" style="left:449.60px;top:388.00px;font-size:11px;line-height:11px;color:#333333;transform:scaleX(0.9034);">Close</span>
<span class="t" style="left:569.70px;top:388.00px;font-size:11px;line-height:11px;color:#333333;transform:scaleX(0.9379);">2026/03/16 (15</span>
<span class="t" style="left:579.00px;top:402.00px;font-size:11px;line-height:11px;color:#333333;transform:scaleX(0.9265);">days passed)</span>
<span class="t" style="left:711.00px;top:388.00px;font-size:11px;line-height:11px;color:#333333;transform:scaleX(0.9187);">46,080</span>
<span class="t" style="left:755.80px;top:388.00px;font-size:11px;line-height:11px;color:#b0b0b0;transform:scaleX(0.9187);">0</span>
<span class="t" style="left:755.50px;top:405.00px;font-size:11px;line-height:11px;color:#b0b0b0;transform:scaleX(0.8607);">(0)</span>
<span class="t" style="left:857.80px;top:388.00px;font-size:11px;line-height:11px;color:#b0b0b0;transform:scaleX(0.9187);">0</span>
<span class="t" style="left:857.50px;top:405.00px;font-size:11px;line-height:11px;color:#b0b0b0;transform:scaleX(0.8607);">(0)</span>
<span class="t" style="left:959.80px;top:388.00px;font-size:11px;line-height:11px;color:#b0b0b0;transform:scaleX(0.9187);">0</span>
<span class="t" style="left:959.50px;top:405.00px;font-size:11px;line-height:11px;color:#b0b0b0;transform:scaleX(0.8607);">(0)</span>
<span class="t" style="left:1062.30px;top:388.00px;font-size:11px;line-height:11px;color:#333333;transform:scaleX(0.9687);">[User Department]</span>
<span class="t" style="left:1062.30px;top:402.00px;font-size:11px;line-height:11px;color:#333333;transform:scaleX(0.9371);">[User Name]</span>
</body></html>
